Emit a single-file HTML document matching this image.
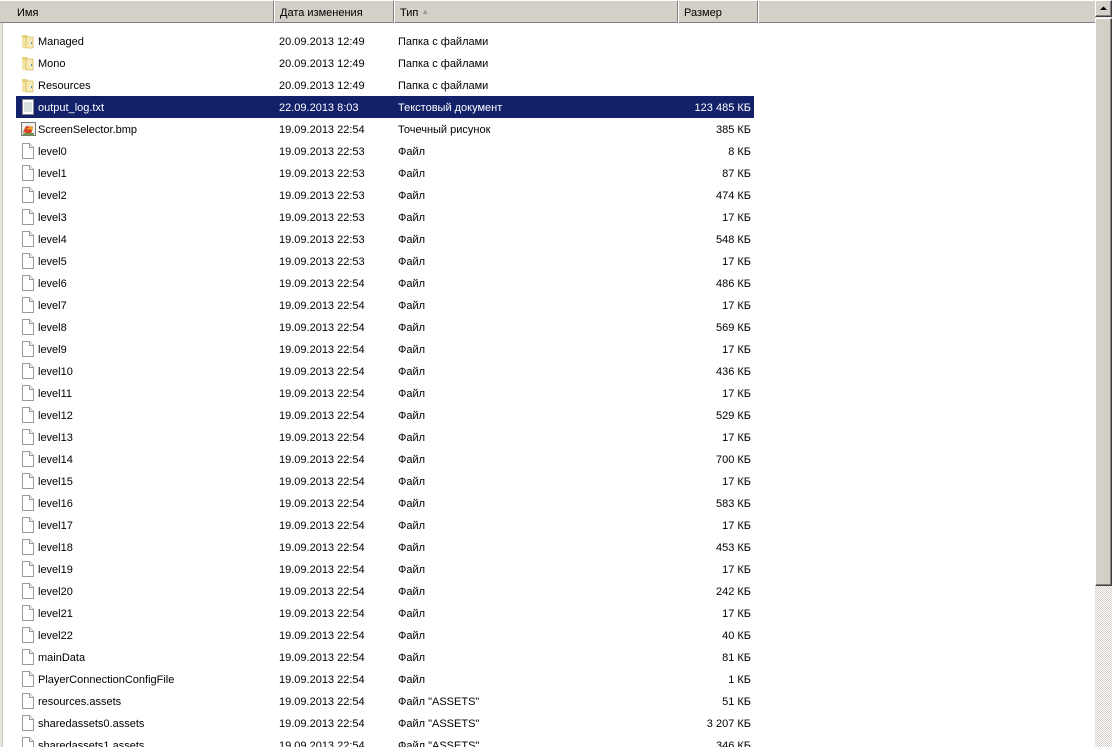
<!DOCTYPE html>
<html><head><meta charset="utf-8"><style>
*{margin:0;padding:0;box-sizing:border-box}
html,body{width:1112px;height:747px;overflow:hidden}
body{background:#fff;font-family:Tahoma,"Liberation Sans","DejaVu Sans",sans-serif;font-size:11px;color:#000;position:relative}
.hdr{position:absolute;left:0;top:0;width:1095px;height:23px;background:#d4d0c8;border-bottom:1px solid #808080;border-top:1px solid #fff}
.hc{position:absolute;top:0;height:22px;line-height:24px;padding-left:6px;border-right:1px solid #808080;box-shadow:1px 0 0 #fff}
.lb{position:absolute;left:0;top:23px;width:3px;height:724px;background:#e8e6e0;border-right:1px solid #c8c5bd}
.r{position:absolute;left:16px;width:738px;height:22px;line-height:22px}
.r span{position:absolute;top:1px;white-space:nowrap}
.n{left:22px}.d{left:263px}.t{left:382px}.s{right:3px}
.sel{background:#13216a;color:#fff}
.ic{position:absolute;left:5px;top:3px;width:13px;height:16px}
.sb{position:absolute;left:1095px;top:0;width:17px;height:747px;background-color:#e9e7e2;background-image:repeating-conic-gradient(#d4d0c8 0 25%,#fff 0 50%);background-size:2px 2px}
.btn{position:absolute;left:0;width:17px;background:#d4d0c8;border:1px solid;border-color:#fff #404040 #404040 #fff;box-shadow:inset -1px -1px 0 #808080}
</style></head><body>
<div class="hdr">
<div class="hc" style="left:0;width:274px;padding-left:17px">Имя</div>
<div class="hc" style="left:274px;width:120px">Дата изменения</div>
<div class="hc" style="left:394px;width:284px">Тип <span style="color:#999;font-size:8px;position:relative;top:-2px">▲</span></div>
<div class="hc" style="left:678px;width:80px">Размер</div>
</div>
<div class="lb"></div>
<div class="sb">
<div class="btn" style="top:0;height:17px"><svg width="15" height="15" style="position:absolute;left:0;top:0"><path d="M4 9h7L7.5 5.5z" fill="#000"/></svg></div>
<div class="btn" style="top:18px;height:568px"></div>
</div>
<svg width="0" height="0" style="position:absolute"><defs>
<g id="fold"><path d="M1 2h5l1 2h5v11H1z" fill="#e9d27a"/><path d="M1 5h4v10H1z" fill="#f4e6a8"/><path d="M5 4h7v11H5z" fill="#f7eab5" stroke="#c9a93f" stroke-width=".6"/><rect x="10" y="9" width="1" height="2" fill="#4a8fd8"/></g>
<g id="file"><path d="M1.5 .5h7l4 4v11h-11z" fill="#fff" stroke="#9a9a9a"/><path d="M8.5 .5v4h4" fill="#eee" stroke="#9a9a9a"/></g>
<g id="txt"><path d="M1.5 .5h11v15h-11z" fill="#fff" stroke="#8a8a8a"/><path d="M3 4h8M3 6h8M3 8h8M3 10h8M3 12h8" stroke="#9aa" stroke-width=".8"/></g>
<g id="bmp"><rect x=".5" y="1.5" width="14" height="13" fill="#eee" stroke="#777"/><path d="M2 11l3-6 7 1-2 7z" fill="#d8402a"/><path d="M5 8l6-3 1 4z" fill="#f0a020"/><rect x="2" y="12" width="11" height="2" fill="#6a9a40"/></g>
</defs></svg>

<div class="r" style="top:30px"><svg class="ic"><use href="#fold"/></svg><span class="n">Managed</span><span class="d">20.09.2013 12:49</span><span class="t">Папка с файлами</span></div>
<div class="r" style="top:52px"><svg class="ic"><use href="#fold"/></svg><span class="n">Mono</span><span class="d">20.09.2013 12:49</span><span class="t">Папка с файлами</span></div>
<div class="r" style="top:74px"><svg class="ic"><use href="#fold"/></svg><span class="n">Resources</span><span class="d">20.09.2013 12:49</span><span class="t">Папка с файлами</span></div>
<div class="r sel" style="top:96px"><svg class="ic"><use href="#txt"/></svg><span class="n">output_log.txt</span><span class="d">22.09.2013 8:03</span><span class="t">Текстовый документ</span><span class="s">123 485 КБ</span></div>
<div class="r" style="top:118px"><svg class="ic" style="width:15px"><use href="#bmp"/></svg><span class="n">ScreenSelector.bmp</span><span class="d">19.09.2013 22:54</span><span class="t">Точечный рисунок</span><span class="s">385 КБ</span></div>
<div class="r" style="top:140px"><svg class="ic"><use href="#file"/></svg><span class="n">level0</span><span class="d">19.09.2013 22:53</span><span class="t">Файл</span><span class="s">8 КБ</span></div>
<div class="r" style="top:162px"><svg class="ic"><use href="#file"/></svg><span class="n">level1</span><span class="d">19.09.2013 22:53</span><span class="t">Файл</span><span class="s">87 КБ</span></div>
<div class="r" style="top:184px"><svg class="ic"><use href="#file"/></svg><span class="n">level2</span><span class="d">19.09.2013 22:53</span><span class="t">Файл</span><span class="s">474 КБ</span></div>
<div class="r" style="top:206px"><svg class="ic"><use href="#file"/></svg><span class="n">level3</span><span class="d">19.09.2013 22:53</span><span class="t">Файл</span><span class="s">17 КБ</span></div>
<div class="r" style="top:228px"><svg class="ic"><use href="#file"/></svg><span class="n">level4</span><span class="d">19.09.2013 22:53</span><span class="t">Файл</span><span class="s">548 КБ</span></div>
<div class="r" style="top:250px"><svg class="ic"><use href="#file"/></svg><span class="n">level5</span><span class="d">19.09.2013 22:53</span><span class="t">Файл</span><span class="s">17 КБ</span></div>
<div class="r" style="top:272px"><svg class="ic"><use href="#file"/></svg><span class="n">level6</span><span class="d">19.09.2013 22:54</span><span class="t">Файл</span><span class="s">486 КБ</span></div>
<div class="r" style="top:294px"><svg class="ic"><use href="#file"/></svg><span class="n">level7</span><span class="d">19.09.2013 22:54</span><span class="t">Файл</span><span class="s">17 КБ</span></div>
<div class="r" style="top:316px"><svg class="ic"><use href="#file"/></svg><span class="n">level8</span><span class="d">19.09.2013 22:54</span><span class="t">Файл</span><span class="s">569 КБ</span></div>
<div class="r" style="top:338px"><svg class="ic"><use href="#file"/></svg><span class="n">level9</span><span class="d">19.09.2013 22:54</span><span class="t">Файл</span><span class="s">17 КБ</span></div>
<div class="r" style="top:360px"><svg class="ic"><use href="#file"/></svg><span class="n">level10</span><span class="d">19.09.2013 22:54</span><span class="t">Файл</span><span class="s">436 КБ</span></div>
<div class="r" style="top:382px"><svg class="ic"><use href="#file"/></svg><span class="n">level11</span><span class="d">19.09.2013 22:54</span><span class="t">Файл</span><span class="s">17 КБ</span></div>
<div class="r" style="top:404px"><svg class="ic"><use href="#file"/></svg><span class="n">level12</span><span class="d">19.09.2013 22:54</span><span class="t">Файл</span><span class="s">529 КБ</span></div>
<div class="r" style="top:426px"><svg class="ic"><use href="#file"/></svg><span class="n">level13</span><span class="d">19.09.2013 22:54</span><span class="t">Файл</span><span class="s">17 КБ</span></div>
<div class="r" style="top:448px"><svg class="ic"><use href="#file"/></svg><span class="n">level14</span><span class="d">19.09.2013 22:54</span><span class="t">Файл</span><span class="s">700 КБ</span></div>
<div class="r" style="top:470px"><svg class="ic"><use href="#file"/></svg><span class="n">level15</span><span class="d">19.09.2013 22:54</span><span class="t">Файл</span><span class="s">17 КБ</span></div>
<div class="r" style="top:492px"><svg class="ic"><use href="#file"/></svg><span class="n">level16</span><span class="d">19.09.2013 22:54</span><span class="t">Файл</span><span class="s">583 КБ</span></div>
<div class="r" style="top:514px"><svg class="ic"><use href="#file"/></svg><span class="n">level17</span><span class="d">19.09.2013 22:54</span><span class="t">Файл</span><span class="s">17 КБ</span></div>
<div class="r" style="top:536px"><svg class="ic"><use href="#file"/></svg><span class="n">level18</span><span class="d">19.09.2013 22:54</span><span class="t">Файл</span><span class="s">453 КБ</span></div>
<div class="r" style="top:558px"><svg class="ic"><use href="#file"/></svg><span class="n">level19</span><span class="d">19.09.2013 22:54</span><span class="t">Файл</span><span class="s">17 КБ</span></div>
<div class="r" style="top:580px"><svg class="ic"><use href="#file"/></svg><span class="n">level20</span><span class="d">19.09.2013 22:54</span><span class="t">Файл</span><span class="s">242 КБ</span></div>
<div class="r" style="top:602px"><svg class="ic"><use href="#file"/></svg><span class="n">level21</span><span class="d">19.09.2013 22:54</span><span class="t">Файл</span><span class="s">17 КБ</span></div>
<div class="r" style="top:624px"><svg class="ic"><use href="#file"/></svg><span class="n">level22</span><span class="d">19.09.2013 22:54</span><span class="t">Файл</span><span class="s">40 КБ</span></div>
<div class="r" style="top:646px"><svg class="ic"><use href="#file"/></svg><span class="n">mainData</span><span class="d">19.09.2013 22:54</span><span class="t">Файл</span><span class="s">81 КБ</span></div>
<div class="r" style="top:668px"><svg class="ic"><use href="#file"/></svg><span class="n">PlayerConnectionConfigFile</span><span class="d">19.09.2013 22:54</span><span class="t">Файл</span><span class="s">1 КБ</span></div>
<div class="r" style="top:690px"><svg class="ic"><use href="#file"/></svg><span class="n">resources.assets</span><span class="d">19.09.2013 22:54</span><span class="t">Файл "ASSETS"</span><span class="s">51 КБ</span></div>
<div class="r" style="top:712px"><svg class="ic"><use href="#file"/></svg><span class="n">sharedassets0.assets</span><span class="d">19.09.2013 22:54</span><span class="t">Файл "ASSETS"</span><span class="s">3 207 КБ</span></div>
<div class="r" style="top:734px"><svg class="ic"><use href="#file"/></svg><span class="n">sharedassets1.assets</span><span class="d">19.09.2013 22:54</span><span class="t">Файл "ASSETS"</span><span class="s">346 КБ</span></div>
</body></html>
